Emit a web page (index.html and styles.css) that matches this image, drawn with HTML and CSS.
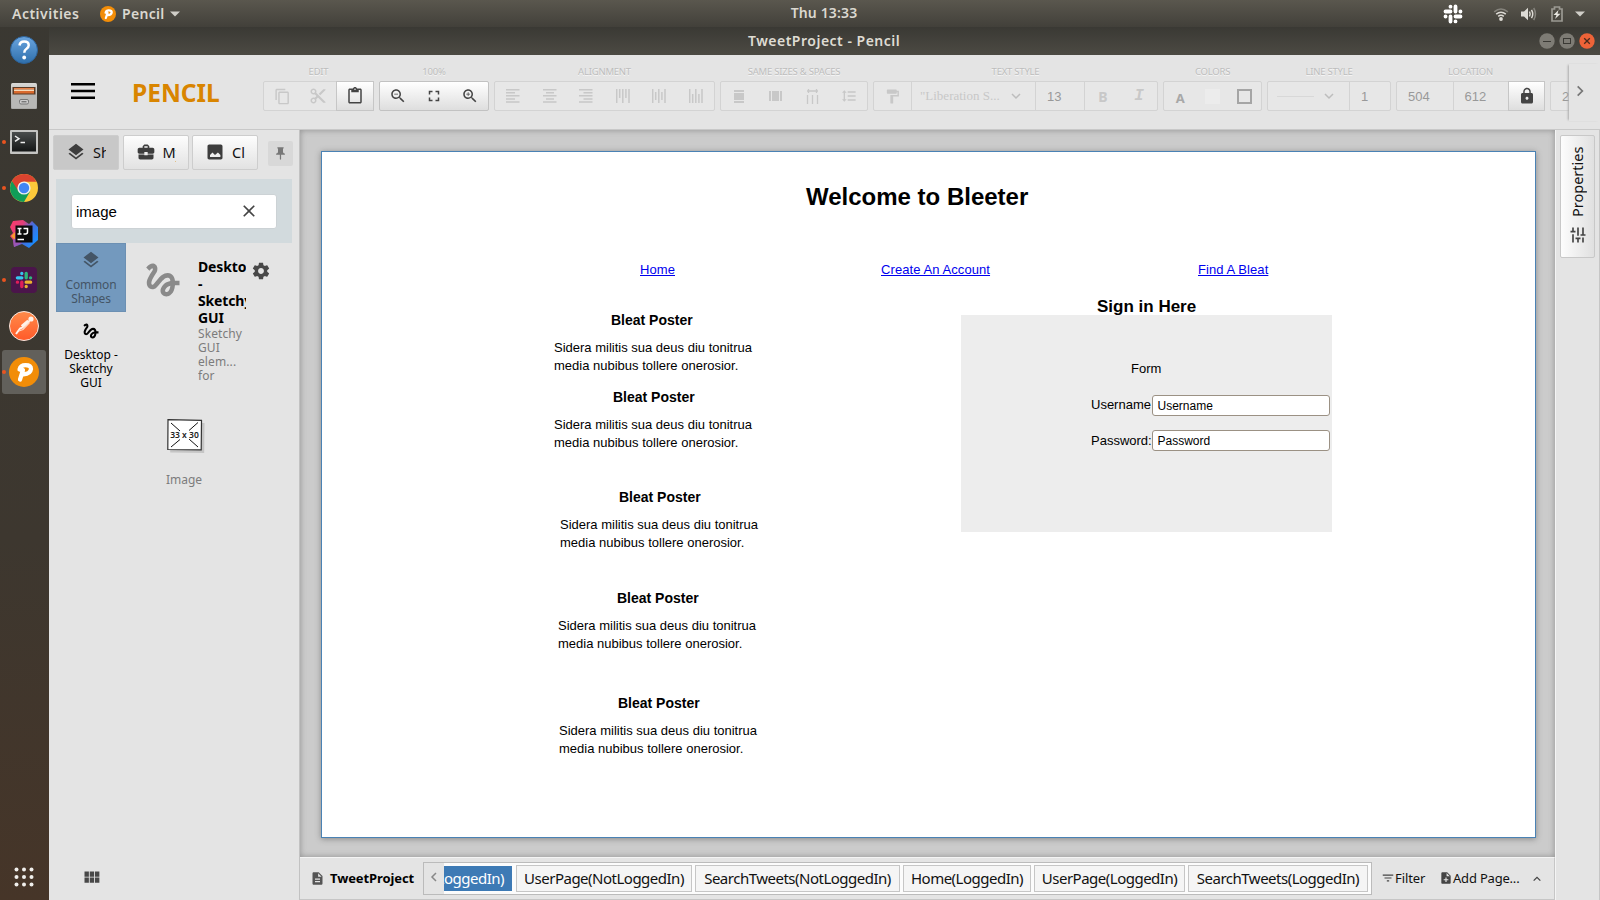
FILE: index.html
```html
<!DOCTYPE html>
<html lang="en">
<head>
<meta charset="utf-8">
<title>TweetProject - Pencil</title>
<link rel="stylesheet" href="styles.css">
</head>
<body>
<svg class="defs" width="0" height="0">
  <defs>
    <linearGradient id="gHelp" x1="0" y1="0" x2="0" y2="1"><stop offset="0" stop-color="#6aa5e0"/><stop offset="1" stop-color="#2f6fab"/></linearGradient>
    <linearGradient id="gMetal" x1="0" y1="0" x2="0" y2="1"><stop offset="0" stop-color="#d8d8d6"/><stop offset="1" stop-color="#9a9a98"/></linearGradient>
    <linearGradient id="gTerm" x1="0" y1="0" x2="0" y2="1"><stop offset="0" stop-color="#4a4d4d"/><stop offset="1" stop-color="#141616"/></linearGradient>
    <linearGradient id="gPost" x1="0" y1="0" x2="0" y2="1"><stop offset="0" stop-color="#ff8b4a"/><stop offset="1" stop-color="#ff5a2a"/></linearGradient>
    <linearGradient id="gIdea" x1="0" y1="0" x2="1" y2=".6"><stop offset="0" stop-color="#ff3a6a"/><stop offset=".4" stop-color="#e0407a"/><stop offset=".65" stop-color="#4a6ad8"/><stop offset="1" stop-color="#1a8cff"/></linearGradient>
    <symbol id="layers" viewBox="0 0 24 24"><path d="M11.990 18.540l-7.370-5.730L3 14.070l9 7 9-7-1.630-1.270-7.380 5.740zM12 16l7.360-5.730L21 9l-9-7-9 7 1.630 1.270L12 16z"/></symbol>
    <symbol id="gesture" viewBox="0 0 24 24"><path d="M4.590 6.890c.7-.71 1.400-1.350 1.710-1.220.5.200 0 1.030-.3 1.520-.25.420-2.860 3.890-2.860 6.310 0 1.280.48 2.340 1.340 2.980.75.560 1.740.730 2.640.460 1.070-.31 1.950-1.400 3.060-2.770 1.210-1.490 2.830-3.440 4.080-3.440 1.630 0 1.650 1.010 1.760 1.790-3.780.640-5.380 3.670-5.380 5.370 0 1.700 1.440 3.090 3.210 3.090 1.630 0 4.290-1.330 4.690-6.100H21v-2.500h-2.470c-.15-1.650-1.090-4.200-4.030-4.200-2.250 0-4.180 1.910-4.940 2.840-.58.730-2.060 2.480-2.290 2.720-.25.300-.68.840-1.110.840-.45 0-.72-.83-.36-1.920.35-1.090 1.400-2.860 1.850-3.520.78-1.140 1.300-1.920 1.300-3.280C8.950 3.690 7.310 3 6.440 3 5.120 3 3.970 4 3.720 4.250c-.36.360-.66.660-.88.930l1.750 1.710zm9.290 11.660c-.31 0-.74-.26-.74-.72 0-.6.73-2.200 2.870-2.760-.3 2.690-1.430 3.480-2.130 3.480z"/></symbol>
    <symbol id="chevron" viewBox="0 0 12 12"><path d="M2 4l4 4 4-4" fill="none" stroke="currentColor" stroke-width="1.500"/></symbol>
    <symbol id="pencilp" viewBox="0 0 30 30"><circle cx="15" cy="15" r="15" fill="#f28d08"/><path d="M11 22.500L14 13M10.500 12.500Q11.500 8.200 16.500 8.200Q22 8.200 22 12Q21.500 16.800 14.500 17.300" fill="none" stroke="#fff" stroke-width="4.200" stroke-linecap="round" stroke-linejoin="round"/></symbol>
  </defs>
</svg>
<div class="desktop">
  <header class="topbar">
    <div class="top-left">
      <span class="activities">Activities</span>
      <svg width="16" height="16"><use href="#pencilp"/></svg>
      <span class="appname">Pencil</span>
      <svg class="tri" width="10" height="6"><path d="M0 .5h10L5 5.500z" fill="#d0cec8"/></svg>
    </div>
    <div class="clock">Thu 13:33</div>
    <div class="tray">
      <svg width="20" height="20" viewBox="0 0 20 20" class="tslack"><path d="M7.500 2.600v.1M7.500 7.500H2.500M12.500 2.500v5M17.400 7.500h.1M12.500 17.400v-.1M12.500 12.500h5M7.500 17.500v-5M2.500 12.500h.1" stroke="#fff" stroke-width="3.800" stroke-linecap="round" fill="none"/></svg>
      <svg width="16" height="14" viewBox="0 0 16 14" class="twifi line" stroke-width="1.600"><path d="M1.200 4.800q6.800-5.600 13.600 0" stroke="#85837c"/><path d="M3.200 7.200q4.800-3.800 9.600 0M5.200 9.300q2.800-2 5.600 0" stroke="#dedcd6"/><circle cx="8" cy="12" r="1.900" fill="#dedcd6"/></svg>
      <svg width="16" height="14" viewBox="0 0 16 14" class="tvol line" stroke-width="1.500"><path d="M0 4.500h3L7 .8v12.400L3 9.500H0z" fill="#dedcd6"/><path d="M8.500 4.500q1.300 2.500 0 5M10.500 2.800q2.500 4.200 0 8.400" stroke="#dedcd6"/><path d="M12.700 1q3.500 6 0 12" stroke="#85837c"/></svg>
      <svg width="12" height="16" viewBox="0 0 12 16" class="tbat"><path d="M1 3h2.500V1h5v2H11v12H1z" fill="none" stroke="#9b9992" stroke-width="1.700"/><path d="M7.500 4L2.500 9h3L4 13l5.500-5.200H6.500z" fill="#e8e6e0"/></svg>
      <svg width="10" height="6"><path d="M0 .5h10L5 5.500z" fill="#d0cec8"/></svg>
    </div>
  </header>
  <div class="below">
    <nav class="dock">
      <div class="launch"><svg width="28" height="28" viewBox="0 0 28 28"><circle cx="14" cy="14" r="13.500" fill="url(#gHelp)" stroke="#2d639b"/><path d="M9.500 9.500q.5-4 4.700-4 4.500 0 4.500 3.700 0 2-2.200 3.600-2.200 1.500-2.200 4" fill="none" stroke="#fff" stroke-width="2.500"/><circle cx="14.200" cy="21.500" r="1.900" fill="#fff"/></svg></div>
      <div class="launch"><svg width="28" height="28" viewBox="0 0 28 28"><rect x="1" y="1" width="26" height="26" rx="1.500" fill="url(#gMetal)"/><rect x="2.500" y="5" width="23" height="8" fill="#5a3a25"/><path d="M4 6h20v1.500H4z" fill="#e8824a"/><path d="M4 7.500h20v1.500H4z" fill="#f6d9b8"/><path d="M4 9h20v2.500H4z" fill="#d96a2e"/><path d="M1.500 12.500h25V26.500h-25z" fill="#b8b8b6"/><rect x="9.500" y="17.500" width="9" height="4.500" rx="1.500" fill="#ccc" stroke="#777"/><path d="M11.500 19.800h5" stroke="#555"/></svg></div>
      <div class="launch run"><svg width="28" height="24" viewBox="0 0 28 24"><rect width="28" height="24" rx="1" fill="#c4c4c2"/><rect x="2" y="2" width="24" height="19.500" fill="url(#gTerm)"/><path d="M5 6l4 2.700-4 2.700M10.500 12.500h4.500" fill="none" stroke="#eee" stroke-width="1.500"/></svg></div>
      <div class="launch run"><svg width="28" height="28" viewBox="0 0 28 28"><circle cx="14" cy="14" r="14" fill="#fdc93a"/><path d="M14 14L1.900 7A14 14 0 0 0 14 28l6-10.500z" fill="#109d58"/><path d="M14 7.700h12.500A14 14 0 0 0 1.900 7L8.500 17.200z" fill="#d9432f"/><circle cx="14" cy="14" r="6.600" fill="#f1f1f1"/><circle cx="14" cy="14" r="5.200" fill="#4285f4"/></svg></div>
      <div class="launch"><svg width="28" height="28" viewBox="0 0 28 28"><path d="M3 1l10-1 6 4 3-3 6 6v13l-9 8-7-4-8 3-1-7-3-4 3-3-3-6z" fill="url(#gIdea)"/><path d="M1 16l4-4v8z" fill="#f79a2c"/><path d="M3 20l3-2 6 5-8 4z" fill="#9a55b5"/><rect x="5.500" y="5.500" width="17" height="17" fill="#0b0b0b"/><path d="M7.500 8.500h4M9.500 8.500v5.500M7.500 14h4M13.500 8.500h4v3.500q0 2-2 2h-2M7.500 19.500h6.500" fill="none" stroke="#fff" stroke-width="1.500"/></svg></div>
      <div class="launch run"><svg width="26" height="26" viewBox="0 0 26 26"><rect width="26" height="26" rx="4" fill="#4b154b"/><g transform="translate(4.200 4.200) scale(.88)" stroke-width="3.800" stroke-linecap="round"><path d="M7.500 2.600v.1M7.500 7.500H2.500" stroke="#36c5f0"/><path d="M12.500 2.500v5M17.400 7.500h.1" stroke="#2eb67d"/><path d="M12.500 17.400v-.1M12.500 12.500h5" stroke="#ecb22e"/><path d="M7.500 17.500v-5M2.500 12.500h.1" stroke="#e01e5a"/></g></svg></div>
      <div class="launch"><svg width="30" height="30" viewBox="0 0 30 30"><circle cx="15" cy="15" r="14.500" fill="url(#gPost)" stroke="#f7e8e0"/><circle cx="22" cy="8" r="2.600" fill="#fff2ea"/><path d="M20.500 10l-7 6.500-2.500 1-4 5.500M19 9.500l-6.500 5.500" fill="none" stroke="#fff2ea" stroke-width="2"/><path d="M20.500 11.500l-6.500 7-4 1.500" fill="none" stroke="#ffd9c4" stroke-width="1.200"/></svg></div>
      <div class="launch run current"><svg width="30" height="30"><use href="#pencilp"/></svg></div>
      <svg class="apps" width="20" height="20"><circle cx="2.500" cy="2.500" r="2"/><circle cx="10" cy="2.500" r="2"/><circle cx="17.500" cy="2.500" r="2"/><circle cx="2.500" cy="10" r="2"/><circle cx="10" cy="10" r="2"/><circle cx="17.500" cy="10" r="2"/><circle cx="2.500" cy="17.500" r="2"/><circle cx="10" cy="17.500" r="2"/><circle cx="17.500" cy="17.500" r="2"/></svg>
    </nav>
    <div class="window">
      <div class="titlebar">
        <span class="wtitle">TweetProject - Pencil</span>
        <div class="wbtns">
          <svg width="16" height="16"><circle cx="8" cy="8" r="7.700" fill="#7e7c75"/><path d="M4 8.500h8" stroke="#3a3934"/></svg>
          <svg width="16" height="16"><circle cx="8" cy="8" r="7.700" fill="#7e7c75"/><rect x="4.500" y="5.500" width="7" height="5" fill="none" stroke="#3a3934"/></svg>
          <svg width="16" height="16"><circle cx="8" cy="8" r="7.700" fill="#ee6338"/><path d="M5.200 5.200l5.600 5.600M10.800 5.200l-5.600 5.600" stroke="#4a2a1c" stroke-width="1.300"/></svg>
        </div>
      </div>
      <div class="toolbar">
        <svg class="burger" width="24" height="16"><path d="M0 1.200h24M0 8h24M0 14.800h24" stroke="#000" stroke-width="2.400"/></svg>
        <div class="brand">PENCIL</div>
        <div class="groups">
          <section class="group" style="width:111px"><h2>EDIT</h2><div class="cells">
            <span class="cell off"><svg width="17" height="17" viewBox="0 0 24 24"><path d="M16 1H4c-1.100 0-2 .9-2 2v14h2V3h12V1zm3 4H8c-1.100 0-2 .9-2 2v14c0 1.100.9 2 2 2h11c1.100 0 2-.9 2-2V7c0-1.100-.9-2-2-2zm0 16H8V7h11v14z"/></svg></span>
            <span class="cell off"><svg width="18" height="18" viewBox="0 0 24 24"><path d="M9.640 7.640c.23-.5.36-1.050.36-1.640 0-2.210-1.790-4-4-4S2 3.790 2 6s1.790 4 4 4c.59 0 1.140-.13 1.640-.36L10 12l-2.360 2.360C7.140 14.130 6.590 14 6 14c-2.210 0-4 1.790-4 4s1.790 4 4 4 4-1.790 4-4c0-.59-.13-1.140-.36-1.640L12 14l7 7h3v-1L9.640 7.640zM6 8c-1.100 0-2-.89-2-2s.9-2 2-2 2 .89 2 2-.9 2-2 2zm0 12c-1.100 0-2-.89-2-2s.9-2 2-2 2 .89 2 2-.9 2-2 2zM19 3l-6 6 2 2 7-7V3z"/></svg></span>
            <span class="cell on"><svg width="18" height="18" viewBox="0 0 24 24"><path d="M19 2h-4.180C14.400.84 13.300 0 12 0c-1.300 0-2.400.84-2.820 2H5c-1.100 0-2 .9-2 2v16c0 1.100.9 2 2 2h14c1.100 0 2-.9 2-2V4c0-1.100-.9-2-2-2zm-7 0c.55 0 1 .45 1 1s-.45 1-1 1-1-.45-1-1 .45-1 1-1zm7 18H5V4h2v3h10V4h2v16z"/></svg></span>
          </div></section>
          <section class="group" style="width:110px"><h2>100%</h2><div class="cells lit">
            <span class="cell"><svg width="18" height="18" viewBox="0 0 24 24"><path d="M15.500 14h-.79l-.28-.27C15.410 12.590 16 11.110 16 9.500 16 5.910 13.090 3 9.500 3S3 5.910 3 9.500 5.910 16 9.500 16c1.610 0 3.090-.59 4.230-1.570l.27.280v.79l5 4.990L20.490 19l-4.990-5zm-6 0C7.010 14 5 11.990 5 9.500S7.010 5 9.500 5 14 7.010 14 9.500 11.990 14 9.500 14zM7 9h5v1H7z"/></svg></span>
            <span class="cell"><svg width="18" height="18" viewBox="0 0 24 24"><path d="M7 14H5v5h5v-2H7v-3zm-2-4h2V7h3V5H5v5zm12 7h-3v2h5v-5h-2v3zM14 5v2h3v3h2V5h-5z"/></svg></span>
            <span class="cell"><svg width="18" height="18" viewBox="0 0 24 24"><path d="M15.500 14h-.79l-.28-.27C15.410 12.590 16 11.110 16 9.500 16 5.910 13.090 3 9.500 3S3 5.910 3 9.500 5.910 16 9.500 16c1.610 0 3.090-.59 4.230-1.570l.27.280v.79l5 4.990L20.490 19l-4.990-5zm-6 0C7.010 14 5 11.990 5 9.500S7.010 5 9.500 5 14 7.010 14 9.500 11.990 14 9.500 14zM7 9h2V7h1v2h2v1h-2v2H9v-2H7z"/></svg></span>
          </div></section>
          <section class="group bars" style="width:221px"><h2>ALIGNMENT</h2><div class="cells">
            <span class="cell off"><svg width="14" height="14"><path d="M0 .7h13.500M0 3.700h9M0 6.800h13.500M0 9.900h9M0 13h13.500"/></svg></span>
            <span class="cell off"><svg width="14" height="14"><path d="M0 .7h13.500M3 3.700h8M0 6.800h13.500M3 9.900h8M0 13h13.500"/></svg></span>
            <span class="cell off"><svg width="14" height="14"><path d="M0 .7h13.500M4.500 3.700h9M0 6.800h13.500M4.500 9.900h9M0 13h13.500"/></svg></span>
            <span class="cell off"><svg width="14" height="14"><path d="M.7 0v14M3.700 0v9M6.800 0v14M9.900 0v9M13 0v14"/></svg></span>
            <span class="cell off"><svg width="14" height="14"><path d="M.7 0v14M3.700 3v8M6.800 0v14M9.900 3v8M13 0v14"/></svg></span>
            <span class="cell off"><svg width="14" height="14"><path d="M.7 0v14M3.700 5v9M6.800 0v14M9.900 5v9M13 0v14"/></svg></span>
          </div></section>
          <section class="group" style="width:148px"><h2>SAME SIZES &amp; SPACES</h2><div class="cells">
            <span class="cell off"><svg width="10" height="13"><path d="M0 0h10v2H0zM0 3h10v7H0zM0 11h10v2H0z"/></svg></span>
            <span class="cell off"><svg width="13" height="10"><path d="M0 0v10h2V0zM3 0v10h7V0zM11 0v10h2V0z"/></svg></span>
            <span class="cell off"><svg width="13" height="15" class="hair"><path d="M1 2h11M2.500 0v4M10.500 0v4M1.500 6v9M6.500 6v9M11.500 6v9"/></svg></span>
            <span class="cell off"><svg width="16" height="16" viewBox="0 0 24 24"><path d="M6 7h2.500L5 3.500 1.500 7H4v10H1.500L5 20.500 8.500 17H6V7zm4-2v2h12V5H10zm0 14h12v-2H10v2zm0-6h12v-2H10v2z"/></svg></span>
          </div></section>
          <section class="group" style="width:285px"><h2>TEXT STYLE</h2><div class="cells">
            <span class="cell off fix37"><svg width="17" height="17" viewBox="0 0 24 24"><path d="M18 4V3c0-.55-.45-1-1-1H5c-.55 0-1 .45-1 1v4c0 .55.450 1 1 1h12c.55 0 1-.45 1-1V6h1v4H9v11c0 .55.450 1 1 1h2c.55 0 1-.45 1-1v-9h8V4h-3z"/></svg></span>
            <span class="cell off div fontpick"><span>"Liberation S...</span><svg width="12" height="12"><use href="#chevron"/></svg></span>
            <span class="cell num div size">13</span>
            <span class="cell off div glyph">B</span>
            <span class="cell off glyph ital">I</span>
          </div></section>
          <section class="group" style="width:99px"><h2>COLORS</h2><div class="cells">
            <span class="cell glyph dim">A</span><span class="cell"><i class="swatch"></i></span><span class="cell"><i class="frame"></i></span>
          </div></section>
          <section class="group" style="width:124px"><h2>LINE STYLE</h2><div class="cells">
            <span class="cell off linepick"><i class="dash"></i><svg width="12" height="12"><use href="#chevron"/></svg></span><span class="cell num div lw">1</span>
          </div></section>
          <section class="group" style="width:149px"><h2>LOCATION</h2><div class="cells">
            <span class="cell num loc">504</span><span class="cell num div loc">612</span><span class="cell on fix37"><svg width="18" height="18" viewBox="0 0 24 24"><path d="M18 8h-1V6c0-2.760-2.240-5-5-5S7 3.240 7 6v2H6c-1.100 0-2 .9-2 2v10c0 1.100.9 2 2 2h12c1.100 0 2-.9 2-2V10c0-1.100-.9-2-2-2zm-6 9c-1.100 0-2-.9-2-2s.9-2 2-2 2 .9 2 2-.9 2-2 2zm3.100-9H8.900V6c0-1.710 1.390-3.100 3.100-3.100 1.710 0 3.100 1.390 3.100 3.100v2z"/></svg></span>
          </div></section>
          <section class="group" style="width:60px"><h2></h2><div class="cells"><span class="cell num loc">2</span></div></section>
        </div>
        <div class="more"><svg width="14" height="14"><use href="#chevron"/></svg></div>
      </div>
      <div class="work">
        <aside class="left">
          <div class="tabs">
            <div class="ptab sel"><svg width="20" height="20"><use href="#layers"/></svg><span class="w13">Shapes</span></div>
            <div class="ptab"><svg width="20" height="20" viewBox="0 0 24 24"><path d="M10 16v-1H3.010L3 19c0 1.110.89 2 2 2h14c1.110 0 2-.89 2-2v-4h-7v1h-4zm10-9h-4.010V5l-2-2h-4l-2 2v2H4c-1.100 0-2 .9-2 2v3c0 1.110.89 2 2 2h6v-2h4v2h6c1.100 0 2-.9 2-2V9c0-1.100-.9-2-2-2zm-6 0h-4V5h4v2z"/></svg><span class="w13">My</span></div>
            <div class="ptab"><svg width="20" height="20" viewBox="0 0 24 24"><path d="M21 19V5c0-1.100-.9-2-2-2H5c-1.100 0-2 .9-2 2v14c0 1.100.9 2 2 2h14c1.100 0 2-.9 2-2zM6 18v-2.500l3-3 3 3 3.500-3 3 3V18z"/></svg><span class="w13">Clipart</span></div>
            <div class="pin"><svg width="15" height="15" viewBox="0 0 24 24"><path d="M16 9V4h1V2H7v2h1v5c0 1.660-1.340 3-3 3v2h5.970v7l1 1 1-1v-7H19v-2c-1.660 0-3-1.340-3-3z"/></svg></div>
          </div>
          <div class="search"><div class="sbox"><span>image</span><svg width="20" height="20" viewBox="0 0 24 24"><path d="M19 6.410L17.590 5 12 10.590 6.410 5 5 6.410 10.590 12 5 17.590 6.410 19 12 13.410 17.590 19 19 17.590 13.410 12z"/></svg></div></div>
          <div class="lib">
            <div class="cats">
              <div class="cat picked"><svg width="20" height="20"><use href="#layers"/></svg><span>Common<br>Shapes</span></div>
              <div class="cat second"><svg width="20" height="20"><use href="#gesture"/></svg><span>Desktop -<br>Sketchy<br>GUI</span></div>
            </div>
            <div class="shapes">
              <div class="head">
                <svg class="big" width="44" height="44"><use href="#gesture"/></svg>
                <div class="info"><strong>Desktop<br>-<br>Sketchy<br>GUI</strong><p>Sketchy<br>GUI<br>elem...<br>for</p></div>
                <svg class="gear" width="20" height="20" viewBox="0 0 24 24"><path d="M19.430 12.980c.04-.32.07-.64.07-.98s-.03-.66-.07-.98l2.110-1.650c.19-.15.24-.42.12-.64l-2-3.460c-.12-.22-.39-.3-.61-.22l-2.490 1c-.52-.4-1.080-.73-1.690-.98l-.38-2.650C14.460 2.180 14.250 2 14 2h-4c-.25 0-.46.180-.49.420l-.38 2.650c-.61.25-1.170.59-1.690.98l-2.490-1c-.23-.09-.49 0-.61.220l-2 3.460c-.13.220-.07.490.12.640l2.110 1.650c-.04.320-.07.650-.07.980s.03.660.07.980l-2.110 1.650c-.19.150-.24.420-.12.640l2 3.460c.12.220.39.300.61.220l2.490-1c.52.400 1.080.730 1.690.980l.38 2.650c.03.240.24.420.49.420h4c.25 0 .46-.18.49-.42l.38-2.650c.61-.25 1.170-.59 1.690-.98l2.490 1c.23.09.49 0 .61-.22l2-3.460c.12-.22.07-.49-.12-.64l-2.110-1.650zM12 15.500c-1.930 0-3.500-1.570-3.500-3.500s1.570-3.500 3.500-3.500 3.500 1.570 3.500 3.500-1.570 3.500-3.500 3.500z"/></svg>
              </div>
              <figure><svg width="42" height="40"><path d="M1 1l34 .5-.3 30L.7 31z" transform="translate(2.500 2.500)" fill="#0002"/><path d="M1 .7l33.500.6-.3 29.500L.8 30.500z" fill="#fff" stroke="#333" stroke-width="1.200"/><path d="M4 4l9 8M31 3.500l-9 8M4 28l9-7.500M31 28l-9-8" stroke="#111"/><text x="17.500" y="19" text-anchor="middle" font-size="8.500" class="dim-label">33 x 30</text></svg><figcaption>Image</figcaption></figure>
            </div>
          </div>
          <svg class="mod" width="21" height="21" viewBox="0 0 24 24"><path d="M4 11h5V5H4v6zm0 7h5v-6H4v6zm6 0h5v-6h-5v6zm6 0h5v-6h-5v6zm-6-7h5V5h-5v6zm6-6v6h5V5h-5z"/></svg>
        </aside>
        <div class="center">
          <main class="canvas">
            <div class="page">
              <b class="t h1" style="left:484px;top:31px">Welcome to Bleeter</b>
              <a class="t" style="left:318px;top:109px">Home</a>
              <a class="t" style="left:559px;top:109px">Create An Account</a>
              <a class="t" style="left:876px;top:109px">Find A Bleat</a>
              <b class="t h3" style="left:289px;top:158px">Bleat Poster</b><p class="t" style="left:232px;top:187px">Sidera militis sua deus diu tonitrua<br>media nubibus tollere onerosior.</p>
              <b class="t h3" style="left:291px;top:235px">Bleat Poster</b><p class="t" style="left:232px;top:264px">Sidera militis sua deus diu tonitrua<br>media nubibus tollere onerosior.</p>
              <b class="t h3" style="left:297px;top:335px">Bleat Poster</b><p class="t" style="left:238px;top:364px">Sidera militis sua deus diu tonitrua<br>media nubibus tollere onerosior.</p>
              <b class="t h3" style="left:295px;top:436px">Bleat Poster</b><p class="t" style="left:236px;top:465px">Sidera militis sua deus diu tonitrua<br>media nubibus tollere onerosior.</p>
              <b class="t h3" style="left:296px;top:541px">Bleat Poster</b><p class="t" style="left:237px;top:570px">Sidera militis sua deus diu tonitrua<br>media nubibus tollere onerosior.</p>
              <div class="panel" style="left:639px;top:163px"></div>
              <b class="t h2" style="left:775px;top:145px">Sign in Here</b>
              <span class="t" style="left:809px;top:208px">Form</span>
              <span class="t" style="left:769px;top:244px">Username</span>
              <span class="t" style="left:769px;top:280px">Password:</span>
              <div class="field" style="left:830px;top:243px">Username</div>
              <div class="field" style="left:830px;top:278px">Password</div>
            </div>
          </main>
          <footer class="pages">
            <svg width="15" height="15" viewBox="0 0 24 24"><path d="M14 2H6c-1.100 0-1.990.9-1.990 2L4 20c0 1.100.89 2 1.990 2H18c1.100 0 2-.9 2-2V8l-6-6zm2 16H8v-2h8v2zm0-4H8v-2h8v2zm-3-5V3.500L18.500 9H13z"/></svg>
            <b class="proj">TweetProject</b>
            <div class="strip">
              <span class="prev"><svg width="12" height="12"><use href="#chevron"/></svg></span>
              <span class="cur">Home(NotLoggedIn)</span>
              <span class="pg" style="width:176px">UserPage(NotLoggedIn)</span>
              <span class="pg" style="width:205px">SearchTweets(NotLoggedIn)</span>
              <span class="pg" style="width:128px">Home(LoggedIn)</span>
              <span class="pg" style="width:151px">UserPage(LoggedIn)</span>
              <span class="pg" style="width:180px">SearchTweets(LoggedIn)</span>
            </div>
            <span class="act filter"><svg width="14" height="14" viewBox="0 0 24 24"><path d="M10 18h4v-2h-4v2zM3 6v2h18V6H3zm3 7h12v-2H6v2z"/></svg>Filter</span>
            <span class="act add"><svg width="14" height="14" viewBox="0 0 24 24"><path d="M14 2H6c-1.100 0-1.990.9-1.990 2L4 20c0 1.100.89 2 1.990 2H18c1.100 0 2-.9 2-2V8l-6-6zm2 14h-3v3h-2v-3H8v-2h3v-3h2v3h3v2zm-3-7V3.500L18.500 9H13z"/></svg>Add Page...</span>
            <svg class="up" width="10" height="10"><use href="#chevron"/></svg>
          </footer>
        </div>
        <aside class="right"><div class="props"><span>Properties</span><svg width="20" height="20" viewBox="0 0 24 24"><path d="M3 17v2h6v-2H3zM3 5v2h10V5H3zm10 16v-2h8v-2h-8v-2h-2v6h2zM7 9v2H3v2h4v2h2V9H7zm14 4v-2H11v2h10zm-6-4h2V7h4V5h-4V3h-2v6z"/></svg></div></aside>
      </div>
    </div>
  </div>
</div>
</body>
</html>
```
FILE: styles.css
```css
* { box-sizing: border-box; margin: 0; padding: 0; }
body { width: 1600px; height: 900px; overflow: hidden; font-family: "Noto Sans", "Open Sans", sans-serif; color: #111; }
.defs { position: absolute; }
svg { display: block; flex: none; fill: currentColor; }
svg.line { fill: none; }
.desktop { display: flex; flex-direction: column; height: 900px; background: linear-gradient(#3a3832, #3d372f 60%, #463528); }

/* system bar */
.topbar { display: grid; grid-template-columns: 749px 150px 1fr; height: 27px; background: linear-gradient(#5a574e, #42403a); color: #dbd8d0; font-weight: 600; font-size: 14px; line-height: 26px; }
.top-left { display: flex; align-items: center; padding-left: 12px; }
.activities { width: 88px; letter-spacing: .5px; }
.appname { margin: 0 5px 0 6px; width: 43px; letter-spacing: .3px; }
.clock { text-align: center; letter-spacing: .15px; }
.tray { display: flex; align-items: center; padding-left: 544px; }
.tslack { margin-right: 30px; }
.twifi { margin-right: 12px; }
.tvol { margin-right: 14px; }
.tbat { margin-right: 12px; }

.below { display: flex; flex: 1; min-height: 0; }
.dock { width: 49px; display: flex; flex-direction: column; }
.launch { position: relative; display: flex; align-items: center; justify-content: center; width: 44px; height: 44px; margin: 1px 0 1px 2px; }
.current { background: #62605b; border-radius: 3px; }
.run::before { content: ""; position: absolute; left: 0; top: 20px; width: 4px; height: 4px; border-radius: 50%; background: #e95420; }
.apps { margin: auto 0 13px 14px; color: #f0efec; }

.window { flex: 1; display: flex; flex-direction: column; background: #e4e4e4; min-width: 0; }
.titlebar { display: flex; align-items: center; height: 28px; background: linear-gradient(#3a3934, #4c4a43); color: #dfdcd3; }
.wtitle { width: 1490px; flex: none; padding-left: 699px; font-size: 14px; font-weight: 600; line-height: 26px; letter-spacing: .5px; }
.wbtns { display: flex; gap: 4px; }

/* toolbar */
.toolbar { display: flex; height: 75px; border-bottom: 1px solid #c8c8c8; }
.burger { margin: 28px 0 0 21.500px; }
.brand { width: 130.500px; padding: 20px 0 0 37.500px; color: #d98500; font-size: 24.500px; font-weight: 700; line-height: 36px; letter-spacing: 0; }
.groups { display: flex; gap: 5px; flex: 1; overflow: hidden; padding: 9px 0 9px 38px; }
.group { flex: none; text-align: center; }
.group h2 { height: 17px; line-height: 15px; font-size: 9.500px; font-weight: 400; color: #bdbdbd; letter-spacing: -.22px; white-space: nowrap; text-shadow: 0 1px #f6f6f6; }
.cells { display: flex; height: 30px; border: 1px solid #d3d3d3; border-radius: 2px; background: #e7e7e7; }
.cell { flex: 1; display: flex; align-items: center; justify-content: center; }
.off { color: #c8c8c8; }
.bars svg { stroke: currentColor; stroke-width: 1.500; }
.hair { stroke: currentColor; stroke-width: 1.300; }
.lit, .on { background: linear-gradient(#fff, #dedede); color: #444; }
.lit { border-color: #c2c2c2; }
.on { margin: -1px; border: 1px solid #c6c6c6; }
.div { border-left: 1px solid #d3d3d3; }
.fix37 { flex: 0 0 37px; }
.fontpick { flex: 0 0 124px; font: 13px "Liberation Serif", serif; justify-content: space-between; padding: 0 13px 0 8px; }
.fontpick svg, .linepick svg { color: #bdbdbd; }
.num { font: 13px "Liberation Sans", sans-serif; color: #999; }
.size { flex: 0 0 49px; justify-content: flex-start; padding-left: 11px; }
.glyph { font-weight: 700; font-size: 14px; }
.ital { font-family: "Liberation Mono", monospace; font-style: italic; font-size: 16px; }
.dim { color: #a8a8a8; font-size: 13px; padding-top: 3px; }
.swatch { width: 15px; height: 15px; background: #ececec; }
.frame { width: 15px; height: 15px; border: 2px solid #a5a5a5; }
.linepick { flex: 0 0 81px; justify-content: space-between; padding: 0 14px 0 9px; }
.dash { width: 37px; height: 1px; background: #d8d8d8; }
.lw, .loc { justify-content: flex-start; padding-left: 11px; }
.more { width: 31px; height: 57px; margin-top: 9px; padding: 20px 0 0 4px; color: #777; box-shadow: -2px 0 2px -1px #aaa; }
.more svg { transform: rotate(-90deg); }

.work { display: flex; flex: 1; min-height: 0; }
.left { width: 251px; display: flex; flex-direction: column; border-right: 1px solid #c2c2c2; }
.tabs { display: flex; gap: 3.500px; padding: 5px 0 0 4px; height: 49px; }
.ptab { display: flex; align-items: center; width: 66px; height: 35px; padding: 0 0 2px 12px; border: 1px solid #cdcdcd; border-radius: 2px; background: linear-gradient(#fdfdfd, #e2e2e2); color: #3d3d3d; }
.ptab.sel { background: #c8c8c8; }
.w13 { width: 13px; margin-left: 7px; overflow: hidden; font-size: 14.500px; color: #111; }
.pin { margin: 6px 0 0 6px; width: 25px; height: 25px; display: flex; align-items: center; justify-content: center; background: #d8d8d8; border-radius: 2px; color: #777; }
.search { margin-left: 7px; width: 236px; height: 64px; background: #d2dadd; padding: 15px 0 0 15px; }
.sbox { display: flex; align-items: center; justify-content: space-between; width: 206px; height: 35px; padding: 0 17px 1px 4px; background: #fff; border: 1px solid #ccd2d5; border-radius: 3px; font: 15px "Liberation Sans", sans-serif; color: #000; }
.sbox svg { color: #444; }
.lib { display: flex; padding-left: 7px; flex: 1; }
.cat { display: flex; flex-direction: column; align-items: center; width: 70px; height: 69px; padding-top: 6px; text-align: center; font-size: 12px; line-height: 14px; letter-spacing: -.2px; color: #000; }
.cat span { margin-top: 8px; }
.second { padding-top: 9px; letter-spacing: 0; }
.second span { margin-top: 7px; }
.picked { background: #7399be; border: 1px solid #6c90b3; color: #445566; }
.shapes { width: 166px; }
.head { display: flex; padding-top: 15px; }
.big { margin-left: 15px; color: #8a8a8a; }
.info { width: 48px; margin-left: 13px; overflow: hidden; }
.info strong { display: block; font-size: 14px; line-height: 17px; letter-spacing: -.15px; color: #000; }
.info p { margin-top: 1px; font-size: 12px; line-height: 14px; letter-spacing: .1px; color: #7c7c7c; }
.gear { color: #484848; margin: 3px 0 0 5px; }
figure { display: flex; flex-direction: column; width: 116px; align-items: center; margin-top: 36px; }
figure svg { margin-left: 7px; }
figcaption { margin-top: 12px; font-size: 12px; line-height: 18px; color: #7c7c7c; }
.dim-label { font-weight: 600; fill: #222; }
.mod { margin: 0 0 12px 32px; color: #484848; }

/* drawing area */
.center { flex: 1; display: flex; flex-direction: column; min-width: 0; }
.canvas { height: 727px; padding: 21px 0 0 21px; background: #cbcbcb; box-shadow: inset 0 0 6px #8f8f8f; }
.page { position: relative; width: 1215px; height: 687px; background: #fff; border: 1px solid #4a82b4; box-shadow: 0 1px 6px #888; font: 13px/18px "Liberation Sans", sans-serif; color: #000; }
.t { position: absolute; white-space: nowrap; }
a.t { color: #00e; text-decoration: underline; letter-spacing: .08px; }
.h1 { font-size: 24px; line-height: 28px; }
.h2 { font-size: 17px; line-height: 20px; }
.h3 { font-size: 14px; line-height: 20px; }
.panel { position: absolute; width: 371px; height: 217px; background: #ededed; }
.field { position: absolute; width: 178px; height: 21px; padding-left: 4.500px; border: 1px solid #9b9184; border-radius: 3px; background: #fff; font-size: 12px; line-height: 21px; }

.pages { flex: 1; display: flex; align-items: center; padding-left: 10px; border: solid #c6c6c6; border-width: 0 1px 1px 0; border-top: 1px solid #f4f4f4; color: #333; }
.pages > svg:first-child { color: #555; }
.proj { width: 98px; padding: 0 0 2px 5px; font-size: 13px; color: #000; letter-spacing: -.1px; }
.strip { display: flex; gap: 3px; align-items: center; width: 949px; height: 33px; border: 1px solid #bbb; background: #fcfcfc; overflow: hidden; }
.prev { flex: none; width: 20px; height: 31px; display: grid; place-items: center; padding-bottom: 3px; background: #e4e4e4; color: #888; }
.prev svg { transform: rotate(90deg); }
.cur, .pg { flex: none; height: 27px; line-height: 25px; font-size: 15px; letter-spacing: -.5px; white-space: nowrap; text-align: center; }
.cur { width: 68px; height: 25px; margin-left: -3px; padding-right: 8px; display: flex; justify-content: flex-end; overflow: hidden; background: #3d7ab5; color: #fff; }
.pg { border: 1px solid #c6c6c6; background: #f5f5f5; color: #111; }
.cur + .pg { margin-left: 1px; }
.act { display: flex; align-items: center; padding-bottom: 2px; font-size: 13px; letter-spacing: -.1px; color: #111; white-space: nowrap; }
.act svg { color: #444; }
.filter { width: 58px; margin-left: 9px; }
.add { width: 93px; letter-spacing: -.2px; }
.up { transform: rotate(180deg); color: #444; }
.right { width: 45px; border-right: 1px solid #c6c6c6; padding: 5px 0 0 5px; box-shadow: inset 1px 0 #f4f4f4; }
.props { width: 35px; height: 123px; display: flex; flex-direction: column; align-items: center; border: 1px solid #c8c8c8; border-radius: 2px; background: linear-gradient(90deg, #fdfdfd, #e0e0e0); }
.props span { height: 78px; width: 22px; margin: 7px 2px 0 0; line-height: 22px; font-size: 14.500px; letter-spacing: 0; writing-mode: vertical-rl; transform: rotate(180deg); text-align: center; }
.props svg { margin-top: 4px; color: #444; transform: rotate(-90deg); }
```
